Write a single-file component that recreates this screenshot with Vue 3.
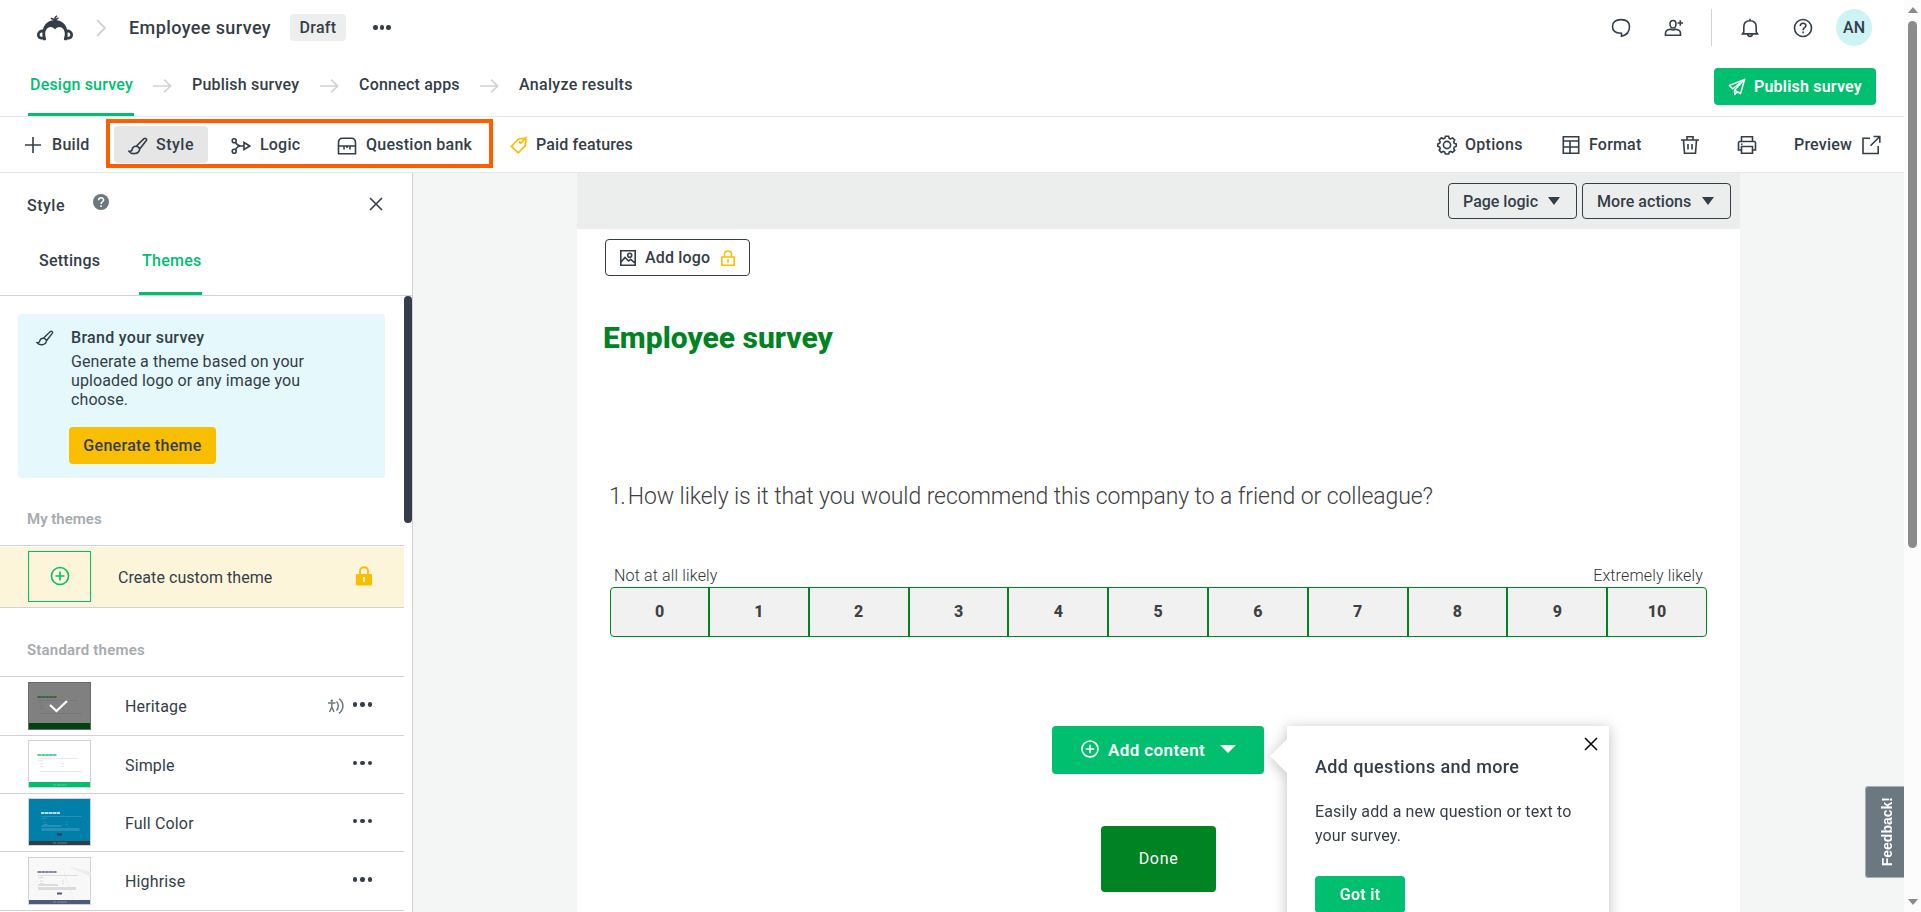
<template>
  <div class="app">
    <div class="content">
      <header class="top-bar">
        <svg class="logo" viewBox="0 0 38 26" width="38" height="26">
          <path fill="#333e48" d="M19 5C13 5 8 9 7 14.500 3 14.500 1 17 1 20c0 3 2.500 5 5.500 4.200.8 1.800 4 1.500 3.600-.7-.4-1.500-.9-2.500-.9-5 0-3.500 2.300-6.500 5.300-6.500 2 0 3.500 1 4.500 2.500 1-1.500 2.500-2.500 4.500-2.500 3 0 5.300 3 5.300 6.500 0 2.500-.5 3.500-.9 5-.4 2.200 2.800 2.500 3.600.7C34.500 25 37 23 37 20c0-3-2-5.500-6-5.500C30 9 25 5 19 5z" />
          <path fill="none" stroke="#333e48" stroke-width="1.500" d="M19 6.500C18.500 4.500 17 3.500 14.800 3.200M19 6c-.5-2.500.3-4.300 2-5.200M19.500 6c.3-1.600 1.300-2.600 3-3" />
          <path fill="#fff" d="M6.500 17.700c-1.700-.5-2.800.6-2.800 2.100s1.200 2.400 2.900 1.900c-.3-1.400-.3-2.700-.1-4zM31.500 17.700c1.700-.5 2.800.6 2.800 2.100s-1.200 2.400-2.900 1.900c.3-1.400.3-2.700.1-4z" />
        </svg>
        <svg class="crumb" viewBox="0 0 10 18" width="10" height="18"><path d="M1 1l8 8-8 8" fill="none" stroke="#d0d2d3" stroke-width="1.800" /></svg>
        <span class="survey-name">Employee survey</span>
        <span class="badge">Draft</span>
        <span class="dots small"><i></i><i></i><i></i></span>
        <div class="top-icons">
          <svg class="chat" viewBox="0 0 20 20" width="20" height="20"><path class="ln" d="M10.500 18.300v-3H9.700c-5-.2-8.200-2.700-8.200-6.700 0-4.400 3-7 8.500-7s8.500 2.600 8.500 7c0 5-3 8.700-8 9.700z" /></svg>
          <svg class="person" viewBox="0 0 20 20" width="20" height="20"><path class="ln" d="M9 2.500c2 0 3 1.500 3 3.500s-1.200 4-3 4-3-2-3-4 1-3.500 3-3.500zM1.500 17.200v-2c0-2.500 2.500-3.700 5-4 1.500 1 3.500 1 5 0 2.500.3 5 1.500 5 4v2zM13.500 5h5.500M16.300 2.300v5.500" /></svg>
          <span class="split"></span>
          <svg class="bell" viewBox="0 0 20 20" width="20" height="20"><path class="ln" d="M10 .8v2M3.800 14V9c0-3.800 2.400-6.300 6.200-6.300S16.200 5.200 16.200 9v5l1.300 1.900H2.500zM7.700 16.300c.3 2.700 4.300 2.700 4.600 0" /></svg>
          <svg class="help" viewBox="0 0 20 20" width="20" height="20"><circle class="ln" cx="10" cy="10" r="8.500" /><path class="ln" d="M7.300 8c0-3.600 5.600-3.600 5.600-.4 0 2.100-2.800 2.200-2.800 4.600M10.100 13.600v1.700" /></svg>
          <span class="avatar">AN</span>
        </div>
      </header>

      <nav class="steps">
        <template v-for="(step, index) in steps" :key="step.label">
          <svg v-if="index" class="step-arrow" viewBox="0 0 19 14" width="19" height="14"><path d="M0 7h17.500M11 .700L17.700 7 11 13.300" fill="none" stroke="#d0d2d3" stroke-width="1.600" /></svg>
          <a :class="['step', step.name, { active: index === 0 }]">{{ step.label }}</a>
        </template>
        <button class="publish">
          <svg viewBox="0 0 18 18" width="18" height="18"><path d="M16.700 1.300L1.300 7.500l3.400 3.200L16.700 1.300 6.500 12.200l.2 4.300 2.700-2.700M6.500 12.200l6 3.500 4.200-14.400" fill="none" stroke="#fff" stroke-width="1.400" stroke-linejoin="round" /></svg>
          <span>Publish survey</span>
        </button>
      </nav>

      <div class="toolbar">
        <div class="tool build">
          <svg viewBox="0 0 18 18" width="18" height="18"><path class="ln" d="M1 9h16M9 1v16" /></svg>
          <span>Build</span>
        </div>
        <div class="highlight">
          <div class="tool style-tool">
            <svg viewBox="0 0 20 18" width="20" height="18"><path class="ln" d="M8.200 9.300L16 1.700c1.500-1 3.200.2 2.300 1.800l-6.600 8.600M8.200 9.300c-2.700-.2-3.600 1.300-4 3-.3 1.500-1.300 2.200-3.200 2 2 3.200 10 3.500 10.700-2.200-.5-1.700-1.700-2.600-3.500-2.800z" /></svg>
            <span>Style</span>
          </div>
          <div class="tool logic-tool">
            <svg viewBox="0 0 20 18" width="20" height="18"><circle class="ln" cx="3.200" cy="3.700" r="2" /><circle class="ln" cx="3.200" cy="14.300" r="2" /><path class="ln" d="M4.500 5.300C6 8 7 9 9.500 9H13M4.500 12.700C6 10 7 9 9.500 9M13 5.500v7L18.700 9z" /></svg>
            <span>Logic</span>
          </div>
          <div class="tool bank-tool">
            <svg viewBox="0 0 20 18" width="20" height="18"><path class="ln" d="M1.500 16.800V6c0-3 1.500-4.700 4-4.700h9c2.500 0 4 1.700 4 4.700v10.800zM1.500 9h17M7 9v3.500M13 9v3.500M10 9v2" /></svg>
            <span>Question bank</span>
          </div>
        </div>
        <div class="tool paid">
          <svg viewBox="0 0 18 18" width="18" height="18"><path d="M1.300 10.500L8.500 3l6-.500 1.500 1.200-.7 5.800-7 7.300zM16.800.700l-5.500 6.200c-1.300.8-2.500-1-1.200-2" fill="none" stroke="#f9be00" stroke-width="1.700" /></svg>
          <span>Paid features</span>
        </div>
        <div class="tools-right">
          <div class="tool options">
            <svg viewBox="0 0 20 20" width="20" height="20"><path class="ln" d="M8.400 1.300h3.200l.6 2 1.500.6 1.900-1 2.100 2.100-1 1.900.6 1.500 2 .6v2.200l-2 .8-.6 1.500 1 1.800-2.200 2.100-1.800-1-1.500.600-.6 2H8.400l-.7-2-1.400-.6-1.900 1-2.200-2.100 1-1.900-.6-1.500-1.900-.7V9l1.900-.7.6-1.500-1-1.900 2.300-2.100 1.800 1 1.500-.6z" /><circle class="ln" cx="10" cy="10" r="3.600" /></svg>
            <span>Options</span>
          </div>
          <div class="tool format">
            <svg viewBox="0 0 18 20" width="18" height="20"><path class="ln" d="M1.300 1.800h15.400v16.500H1.300zM1.300 6h15.400M1.300 12h15.400M8 6v12.300" /></svg>
            <span>Format</span>
          </div>
          <svg class="trash" viewBox="0 0 20 20" width="20" height="20"><path class="ln" d="M1 5h18M3.500 5l1 13.300h11l1-13.300M7 5V1.700h6V5M8 9v5.500M12 9v5.500" /></svg>
          <svg class="printer" viewBox="0 0 20 20" width="20" height="20"><path class="ln" d="M4.500 6.500V1.700h11v4.800M4.500 15H1.500V7.500l1-1h15l1 1V15h-3M4.500 11.500h11v6.800h-11zM4 9.200h1.500" /></svg>
          <div class="tool preview">
            <span>Preview</span>
            <svg viewBox="0 0 20 20" width="20" height="20"><path class="ln" d="M9 3.300H2v15.200h15.200V11M12.500 1.500h6.300v6.300M18.500 1.800l-9 9" /></svg>
          </div>
        </div>
      </div>

      <div class="body">
        <aside class="sidebar">
          <div class="side-head">
            <span class="side-title">Style</span>
            <svg class="side-help" viewBox="0 0 16 16" width="16" height="16"><circle cx="8" cy="8" r="8" fill="#6b787f" /><path d="M5.600 6.300c0-3.400 5-3.200 5-.400 0 1.800-2.500 1.900-2.500 4M8.100 11.200V13" fill="none" stroke="#fff" stroke-width="1.500" /></svg>
            <svg class="side-close" viewBox="0 0 14 14" width="14" height="14"><path class="ln" d="M1 1l12 12M13 1L1 13" /></svg>
          </div>
          <div class="tabs">
            <a class="tab settings">Settings</a>
            <a class="tab themes active">Themes</a>
          </div>
          <div class="side-scroll">
            <div class="theme-list">
              <div class="brand">
                <svg class="brush" viewBox="0 0 20 18" width="18" height="16"><path class="ln" d="M8.200 9.300L16 1.700c1.500-1 3.200.2 2.300 1.800l-6.600 8.600M8.200 9.300c-2.700-.2-3.600 1.300-4 3-.3 1.500-1.300 2.200-3.200 2 2 3.200 10 3.500 10.700-2.200-.5-1.700-1.700-2.600-3.500-2.800z" /></svg>
                <div class="brand-text">
                  <h4>Brand your survey</h4>
                  <p>Generate a theme based on your<br>uploaded logo or any image you<br>choose.</p>
                  <button class="generate">Generate theme</button>
                </div>
              </div>
              <h5 class="mine">My themes</h5>
              <div class="create">
                <span class="create-box">
                  <svg viewBox="0 0 20 20" width="20" height="20"><circle cx="10" cy="10" r="8.500" fill="none" stroke="#00bf6f" stroke-width="1.600" /><path d="M5.500 10h9M10 5.500v9" stroke="#00bf6f" stroke-width="1.600" /></svg>
                </span>
                <span class="create-label">Create custom theme</span>
                <svg class="lock" viewBox="0 0 16 20" width="16" height="20"><path d="M4 8V5c0-5 8-5 8 0v3" fill="none" stroke="#f9be00" stroke-width="1.800" /><rect x="0" y="8" width="16" height="11.500" rx="1" fill="#f9be00" /><path d="M8 11v5" stroke="#fff" stroke-width="1.800" /></svg>
              </div>
              <h5 class="standard">Standard themes</h5>
              <div v-for="theme in themes" :key="theme.name" class="theme">
                <svg class="thumb" viewBox="0 0 63 48" width="63" height="48">
                  <rect width="63" height="48" :fill="theme.border" />
                  <rect x="1" y="1" width="61" height="46" :fill="theme.bg" />
                  <path v-if="theme.name === 'Highrise'" d="M1 31L24 12M36 16l11 30M42 10l20 5v4z" stroke="#f0f0f0" fill="#ececec" />
                  <rect x="1" :y="theme.footY" width="61" :height="47 - theme.footY" :fill="theme.foot" />
                  <g :transform="theme.name === 'Full Color' ? 'translate(3.500 0)' : ''">
                    <path d="M9.500 15h19" :stroke="theme.title" stroke-width="1.800" stroke-dasharray="3.500 .4" opacity=".7" />
                    <path d="M10 18.500h40M10 20.500h5M12 24h3M34 24h2M12 26.500h4M34 26.500h2" :stroke="theme.line" stroke-width=".8" :opacity="theme.name === 'Full Color' ? 0.5 : 1" />
                    <rect v-if="theme.field" x="10" y="27" width="20" height="2" :fill="theme.field" />
                    <rect v-if="theme.field" x="10" y="30" width="38" height="3" :fill="theme.field" />
                    <path v-else d="M11 31.500h43" :stroke="theme.line" stroke-width=".8" />
                  </g>
                  <rect v-if="theme.field" x="29" y="35.500" width="5" height="2" :fill="theme.foot" />
                  <path v-if="!theme.selected" d="M25 45h3M29 45h10" stroke="#fff" stroke-width="1.200" opacity=".3" />
                  <path v-if="theme.selected" d="M22 23l6.500 6L39 19" fill="none" stroke="#fff" stroke-width="2.200" />
                </svg>
                <span class="theme-name">{{ theme.name }}</span>
                <svg v-if="theme.selected" class="accessible" viewBox="0 0 16 16" width="16" height="16"><path d="M0 5h7.500M3.800 5v4.500M3.800 9L1.500 14M3.800 9L6 14M8.500 3.500c2.400 2.500 2.400 6.500 0 9M11 .8c5.200 3.500 5.200 11 0 14.500" fill="none" stroke="#6b787f" stroke-width="1.500" /><circle cx="3.800" cy="2.800" r="1.200" fill="#6b787f" /></svg>
                <span class="dots"><i></i><i></i><i></i></span>
              </div>
            </div>
            <div class="side-track"><div class="side-thumb"></div></div>
          </div>
        </aside>

        <main class="canvas">
          <section class="page">
            <div class="page-bar">
              <button class="outline page-logic"><span>Page logic</span><i class="caret"></i></button>
              <button class="outline more"><span>More actions</span><i class="caret"></i></button>
            </div>
            <button class="outline add-logo">
              <svg viewBox="0 0 16 16" width="16" height="16"><path class="ln" d="M.8.800h14.400v14.400H.8zM1 12l4-4.500 3.500 3.500 2-1.700L15 13" /><circle class="ln" cx="9.700" cy="5.300" r="2" /></svg>
              <span>Add logo</span>
              <svg class="logo-lock" viewBox="0 0 14 16" width="14" height="16"><path d="M3.500 7V4.500c0-4.700 7-4.700 7 0V7M.8 7h12.400v8.200H.8zM7 9.300v3.500" fill="none" stroke="#f9be00" stroke-width="1.600" /></svg>
            </button>
            <h1>Employee survey</h1>
            <p class="question"><span class="number">1.</span> How likely is it that you would recommend this company to a friend or colleague?</p>
            <div class="ends"><span class="low">Not at all likely</span><span class="high">Extremely likely</span></div>
            <div class="scale">
              <div v-for="n in 11" :key="n" class="score">{{ n - 1 }}</div>
            </div>
            <div class="add-row">
              <button class="add-content">
                <svg viewBox="0 0 18 18" width="18" height="18"><circle cx="9" cy="9" r="8" fill="none" stroke="#fff" stroke-width="1.600" /><path d="M4.800 9h8.400M9 4.800v8.400" stroke="#fff" stroke-width="1.600" /></svg>
                <span>Add content</span>
                <i class="caret light"></i>
              </button>
              <div class="popover">
                <svg class="pop-close" viewBox="0 0 14 14" width="14" height="14"><path d="M1 1l12 12M13 1L1 13" stroke="#000" stroke-width="1.500" /></svg>
                <h3>Add questions and more</h3>
                <p>Easily add a new question or text to<br>your survey.</p>
                <button class="got-it">Got it</button>
              </div>
            </div>
            <button class="done">Done</button>
          </section>
          <div class="feedback"><span>Feedback!</span></div>
        </main>
      </div>
    </div>

    <div class="scrollbar">
      <i class="up"></i>
      <div class="handle"></div>
      <i class="down"></i>
    </div>
  </div>
</template>

<script setup>
import { ref } from 'vue';

const steps = ref([
  { name: 'design', label: 'Design survey' },
  { name: 'publish-step', label: 'Publish survey' },
  { name: 'connect', label: 'Connect apps' },
  { name: 'analyze', label: 'Analyze results' }
]);

const themes = ref([
  { name: 'Heritage', selected: true, border: '#6b6b6b', bg: '#808080', footY: 41, foot: '#004210', title: '#1d5a2a', line: '#757575' },
  { name: 'Simple', border: '#d0d2d3', bg: '#fff', footY: 42, foot: '#00bf6f', title: '#00bf6f', line: '#e2e2e2' },
  { name: 'Full Color', border: '#d0d2d3', bg: '#007faa', footY: 43, foot: '#333e48', title: '#fff', line: '#5eacc8', field: '#2690b5' },
  { name: 'Highrise', border: '#d0d2d3', bg: '#f8f8f8', footY: 43, foot: '#4f5978', title: '#4f5978', line: '#d6d6d6', field: '#dcdcdc' }
]);
</script>

<style>
body {
  overflow: hidden;
}
</style>

<style scoped>
* {
  box-sizing: border-box;
}

.app {
  display: flex;
  width: 1921px;
  height: 912px;
  overflow: hidden;
  background: #fff;
  color: #333e48;
  font-family: Roboto, "Noto Sans", sans-serif;
  font-size: 16px;
}

.content {
  display: flex;
  flex-direction: column;
  width: 1904px;
}

svg {
  display: block;
  flex: none;
}

span,
a {
  white-space: nowrap;
}

button {
  font-family: inherit;
  font-size: 16px;
  color: inherit;
  border: none;
  padding: 0;
  white-space: nowrap;
}

.ln {
  fill: none;
  stroke: #333e48;
  stroke-width: 1.6;
}

.top-bar {
  display: flex;
  align-items: center;
  height: 55px;
  padding: 0 32px 0 36px;
}

.crumb {
  margin-left: 22px;
}

.survey-name {
  width: 142px;
  margin: 0 0 1px 23px;
  font-size: 18px;
  font-weight: 500;
  letter-spacing: 0.4px;
}

.badge {
  width: 56px;
  height: 27px;
  margin-left: 19px;
  border-radius: 4px;
  background: #edeeee;
  line-height: 27px;
  text-align: center;
  font-weight: 500;
  letter-spacing: 0.3px;
}

.dots {
  display: flex;
  gap: 3px;
}

.dots i {
  width: 4.5px;
  height: 4.5px;
  border-radius: 50%;
  background: #333e48;
}

.dots.small {
  gap: 2px;
  margin-left: 27px;
}

.top-icons {
  display: flex;
  align-items: center;
  margin-left: auto;
}

.person {
  margin-left: 33px;
}

.split {
  width: 1px;
  height: 37px;
  margin: 0 28px 0 27px;
  background: #d0d2d3;
}

.help {
  margin-left: 33px;
}

.avatar {
  width: 36px;
  height: 37px;
  margin-left: 23px;
  border-radius: 50%;
  background: #cdf3f5;
  line-height: 37px;
  text-align: center;
  font-weight: 500;
}

.steps {
  display: flex;
  height: 62px;
  padding: 0 28px 0 28px;
  border-bottom: 1px solid #e8e9e9;
}

.step {
  height: 61px;
  line-height: 59px;
  font-weight: 500;
  letter-spacing: 0.2px;
}

.step.active {
  color: #00bf6f;
  border-bottom: 3px solid #00bf6f;
}

.design {
  width: 106px;
  padding-left: 2px;
}

.publish-step {
  width: 107px;
}

.connect {
  width: 100px;
}

.analyze {
  width: 114px;
  letter-spacing: 0.3px;
}

.step-arrow {
  margin: 24px 20px 0 21px;
}

.design + .step-arrow {
  margin-left: 19px;
}

.publish {
  display: flex;
  align-items: center;
  gap: 8px;
  width: 162px;
  height: 37px;
  margin: 13px 0 0 auto;
  padding-left: 14px;
  border-radius: 4px;
  background: #00bf6f;
  color: #fff;
  font-weight: 600;
  letter-spacing: 0.2px;
}

.toolbar {
  display: flex;
  height: 56px;
  padding: 0 23px 0 24px;
  border-bottom: 1px solid #e8e9e9;
}

.tool {
  display: flex;
  align-items: center;
  font-weight: 500;
  letter-spacing: 0.2px;
}

.tool svg {
  position: relative;
  top: 1px;
}

.build {
  width: 82px;
  gap: 10px;
  height: 54px;
  letter-spacing: 0.3px;
}

.highlight {
  display: flex;
  width: 387px;
  height: 49px;
  margin-top: 2px;
  padding: 3px 0 0 4px;
  border: 4px solid #ff5e00;
}

.style-tool {
  width: 94px;
  height: 37px;
  padding-left: 14px;
  gap: 8px;
  border-radius: 4px;
  background: #e6e6e6;
  letter-spacing: 0.5px;
}

.logic-tool {
  width: 106px;
  height: 37px;
  padding-left: 23px;
  gap: 9px;
}

.bank-tool {
  height: 37px;
  padding-left: 23px;
  gap: 9px;
  letter-spacing: 0.25px;
}

.paid {
  height: 54px;
  margin-left: 17px;
  gap: 8px;
  letter-spacing: 0.15px;
}

.tools-right {
  display: flex;
  align-items: center;
  height: 54px;
  margin-left: auto;
}

.trash,
.printer {
  margin-top: 2px;
}

.options {
  width: 125px;
  gap: 8px;
  letter-spacing: 0.3px;
}

.format {
  width: 118px;
  gap: 9px;
}

.printer {
  margin-left: 37px;
}

.preview {
  width: 87px;
  margin-left: 37px;
  justify-content: space-between;
}

.body {
  display: flex;
  flex: 1;
  min-height: 0;
}

.sidebar {
  display: flex;
  flex-direction: column;
  width: 413px;
  border-right: 1px solid #d0d2d3;
}

.side-head {
  display: flex;
  height: 61px;
  padding: 0 29px 0 27px;
}

.side-title {
  width: 66px;
  line-height: 65px;
  font-weight: 500;
  letter-spacing: 0.5px;
}

.side-help {
  margin-top: 21px;
}

.side-close {
  margin: 24px 0 0 auto;
}

.tabs {
  display: flex;
  height: 62px;
  padding-left: 39px;
  border-bottom: 1px solid #d0d2d3;
}

.tab {
  height: 61px;
  line-height: 54px;
  font-weight: 500;
  letter-spacing: 0.25px;
}

.settings {
  width: 100px;
}

.themes {
  width: 63px;
  padding-left: 3px;
  color: #00bf6f;
  border-bottom: 3px solid #00bf6f;
}

.side-scroll {
  display: flex;
  flex: 1;
  min-height: 0;
}

.theme-list {
  width: 404px;
}

.side-thumb {
  width: 8px;
  height: 227px;
  border-radius: 4px;
  background: #333e48;
}

.brand {
  display: flex;
  width: 367px;
  height: 164px;
  margin: 18px 0 0 18px;
  border-radius: 4px;
  background: #e5f8fb;
}

.brush {
  margin: 16px 0 0 18px;
}

.brand-text {
  padding: 14px 0 0 17px;
}

.brand h4 {
  margin: 0 0 5px;
  line-height: 19px;
  font-size: 16px;
  font-weight: 500;
  letter-spacing: 0.3px;
}

.brand p {
  margin: 0;
  line-height: 19px;
  white-space: nowrap;
  letter-spacing: 0.1px;
}

.generate {
  width: 147px;
  height: 37px;
  margin: 18px 0 0 -2px;
  border-radius: 4px;
  background: #f9be00;
  font-weight: 500;
  letter-spacing: 0.3px;
}

h5 {
  margin: 0;
  padding-left: 27px;
  border-bottom: 1px solid #d0d2d3;
  font-size: 15px;
  font-weight: 600;
  color: #a5abaf;
}

.mine {
  height: 68px;
  line-height: 82px;
}

.create {
  display: flex;
  align-items: center;
  height: 62px;
  padding: 0 32px 2px 28px;
  border-top: 1px solid #fff;
  border-bottom: 1px solid #d0d2d3;
  background: #fdf5d9;
}

.create-box {
  display: flex;
  align-items: center;
  justify-content: center;
  width: 63px;
  height: 51px;
  border: 1px solid #00bf6f;
}

.create-label {
  margin-left: 27px;
  padding-top: 3px;
  letter-spacing: 0.06px;
}

.lock {
  margin-left: auto;
}

.standard {
  height: 69px;
  line-height: 84px;
  letter-spacing: 0.2px;
}

.theme {
  display: flex;
  align-items: center;
  height: 58px;
  padding: 0 32px 1px 28px;
  border-bottom: 1px solid #d0d2d3;
}

.theme:nth-last-child(4),
.theme:last-child {
  height: 59px;
}

.theme-name {
  margin-left: 34px;
  padding-top: 2px;
  letter-spacing: 0.15px;
}

.theme .dots {
  margin: 0 0 2px auto;
}

.accessible {
  margin-left: auto;
}

.theme .accessible + .dots {
  margin-left: 9px;
}

.canvas {
  position: relative;
  flex: 1;
  background: #f4f6f5;
}

.page {
  width: 1163px;
  height: 739px;
  margin-left: 164px;
  background: #fff;
}

.page-bar {
  display: flex;
  justify-content: flex-end;
  gap: 5px;
  height: 56px;
  padding: 10px 9px 0 0;
  background: #eceeed;
}

.outline {
  display: flex;
  align-items: center;
  height: 36px;
  border: 1px solid #333e48;
  border-radius: 4px;
  background: transparent;
  font-weight: 500;
}

.page-logic {
  width: 129px;
  padding: 0 16px 0 14px;
  justify-content: space-between;
}

.more {
  width: 149px;
  padding: 0 16px 0 14px;
  justify-content: space-between;
  letter-spacing: 0.05px;
}

.caret {
  border-left: 6.5px solid transparent;
  border-right: 6.5px solid transparent;
  border-top: 8px solid #333e48;
}

.caret.light {
  border-left-width: 8px;
  border-right-width: 8px;
  border-top-color: #fff;
}

.add-logo {
  width: 145px;
  height: 37px;
  margin: 10px 0 0 28px;
  padding-left: 14px;
  gap: 9px;
  letter-spacing: 0.15px;
}

.logo-lock {
  margin-left: 2px;
}

h1 {
  margin: 44px 0 0 26px;
  line-height: 36px;
  font-size: 30px;
  font-weight: 800;
  color: #008323;
}

.question {
  margin: 126px 0 0 33px;
  line-height: 30px;
  font-size: 23px;
  font-weight: 300;
  color: #404040;
  white-space: nowrap;
  letter-spacing: -0.08px;
}

.number {
  margin: 0 -2px 0 -1px;
  letter-spacing: -1.5px;
}

.ends {
  display: flex;
  justify-content: space-between;
  height: 20px;
  margin: 54px 37px 0 37px;
  line-height: 20px;
  font-weight: 300;
  color: #333;
  letter-spacing: 0.15px;
}

.scale {
  display: flex;
  width: 1097px;
  height: 50px;
  margin: 1px 0 0 33px;
  border: 1px solid #008323;
  border-radius: 4px;
  background: #f1f1f1;
}

.score {
  flex: 1;
  line-height: 47px;
  text-align: center;
  font-weight: 800;
  color: #404040;
}

.score:first-child {
  flex: none;
  width: 97px;
}

.score + .score {
  border-left: 2px solid #008323;
}

.add-row {
  position: relative;
  margin: 89px 0 0 475px;
}

.add-content {
  display: flex;
  align-items: center;
  width: 212px;
  height: 48px;
  padding-left: 29px;
  border-radius: 4px;
  background: #00bf6f;
  color: #fff;
  font-size: 17px;
  font-weight: 600;
  letter-spacing: 0.4px;
}

.add-content svg {
  margin: 0 9px 3px 0;
}

.add-content span {
  width: 112px;
  text-align: left;
}

.add-content .caret {
  margin-bottom: 3px;
}

.popover {
  position: absolute;
  left: 235px;
  top: 0;
  z-index: 2;
  width: 322px;
  height: 240px;
  padding: 31px 0 0 28px;
  background: #fff;
  filter: drop-shadow(0 2px 7px rgba(0, 0, 0, 0.25));
}

.popover::before {
  content: "";
  position: absolute;
  left: -17px;
  top: 13px;
  border-top: 17px solid transparent;
  border-bottom: 17px solid transparent;
  border-right: 17px solid #fff;
}

.pop-close {
  position: absolute;
  left: 297px;
  top: 11px;
}

.popover h3 {
  margin: 0;
  line-height: 20px;
  font-size: 18px;
  font-weight: 500;
  letter-spacing: 0.36px;
}

.popover p {
  margin: 23px 0 0;
  line-height: 24px;
  white-space: nowrap;
  letter-spacing: 0.14px;
}

.got-it {
  width: 90px;
  height: 37px;
  margin-top: 28px;
  border-radius: 4px;
  background: #00bf6f;
  color: #fff;
  font-weight: 600;
  letter-spacing: 0.3px;
}

.done {
  display: block;
  width: 115px;
  height: 66px;
  margin: 52px 0 0 524px;
  padding: 0 0 1px;
  border-radius: 4px;
  background: #008323;
  color: #fff;
  letter-spacing: 0.7px;
}

.feedback {
  position: absolute;
  right: 0;
  top: 613px;
  display: flex;
  align-items: center;
  justify-content: center;
  width: 39px;
  height: 92px;
  padding-left: 3px;
  border: 1px solid #a6aeb2;
  border-right: none;
  border-radius: 3px 0 0 3px;
  background: #6b787f;
  color: #fff;
}

.feedback span {
  writing-mode: vertical-rl;
  transform: rotate(180deg);
  font-family: "Liberation Sans", Arial, sans-serif;
  font-size: 14px;
  font-weight: 700;
}

.scrollbar {
  display: flex;
  flex-direction: column;
  align-items: center;
  width: 17px;
  padding: 7px 0 7px;
  background: #fcfcfc;
}

.up,
.down {
  border-left: 5.5px solid transparent;
  border-right: 5.5px solid transparent;
}

.up {
  border-bottom: 6px solid #8b8b8b;
}

.down {
  margin-top: auto;
  border-top: 6px solid #8b8b8b;
}

.handle {
  width: 9px;
  height: 527px;
  margin-top: 8px;
  border-radius: 5px;
  background: #8b8b8b;
}
</style>
